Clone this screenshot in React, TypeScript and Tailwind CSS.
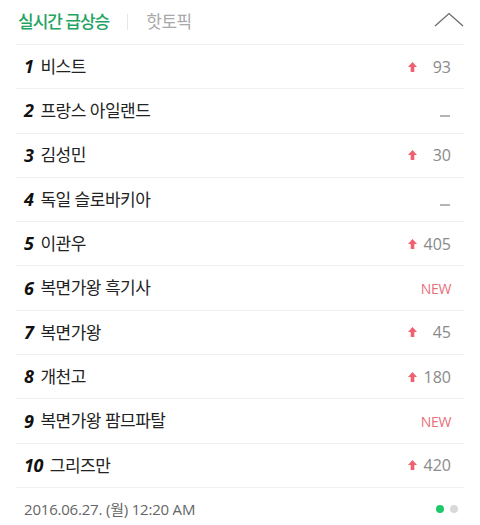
import React from 'react';

type Change = { kind: 'up'; value: number } | { kind: 'same' } | { kind: 'new' };

const keywords: { name: string; change: Change }[] = [
  { name: '비스트', change: { kind: 'up', value: 93 } },
  { name: '프랑스 아일랜드', change: { kind: 'same' } },
  { name: '김성민', change: { kind: 'up', value: 30 } },
  { name: '독일 슬로바키아', change: { kind: 'same' } },
  { name: '이관우', change: { kind: 'up', value: 405 } },
  { name: '복면가왕 흑기사', change: { kind: 'new' } },
  { name: '복면가왕', change: { kind: 'up', value: 45 } },
  { name: '개천고', change: { kind: 'up', value: 180 } },
  { name: '복면가왕 팜므파탈', change: { kind: 'new' } },
  { name: '그리즈만', change: { kind: 'up', value: 420 } },
];

const font = "font-['Open_Sans','Noto_Sans_CJK_KR',sans-serif]";

function UpArrow() {
  return (
    <svg width="9" height="10" viewBox="0 0 9 10">
      <path d="M4.5 0 L9 5 L6.3 5 L6.3 10 L2.7 10 L2.7 5 L0 5 Z" fill="#f0606e" />
    </svg>
  );
}

function ChangeCell({ change }: { change: Change }) {
  if (change.kind === 'new') {
    return <span className="text-[14px] text-[#e8707a] tracking-tight">NEW</span>;
  }
  if (change.kind === 'same') {
    return <span className="block w-[10px] h-[2px] bg-[#b5b5b5] mt-[10px] mr-[1px]" />;
  }
  return (
    <span className="flex items-center">
      <UpArrow />
      <span className="text-[16px] text-[#8a8a8a] w-[34px] text-right">{change.value}</span>
    </span>
  );
}

export default function App() {
  return (
    <div className={`w-[480px] h-[525px] bg-white ${font} overflow-hidden`}>
      {/* Tabs header */}
      <div className="flex items-center h-[44px] pl-[18px] pr-[16px]">
        <span className="text-[17px] font-medium text-[#1fa463] tracking-[-1px]">실시간 급상승</span>
        <span className="mx-[18px] w-px h-[16px] bg-[#e6e6e6]" />
        <span className="text-[17px] text-[#a9a9a9] tracking-[-0.5px]">핫토픽</span>
        <svg className="ml-auto mb-[4px]" width="30" height="16" viewBox="0 0 30 16">
          <path d="M1 14 L15 1.5 L29 14" fill="none" stroke="#6b6b6b" strokeWidth="1.3" />
        </svg>
      </div>

      {/* Keyword list */}
      <ul className="mx-[16px] w-[448px]">
        {keywords.map((k, i) => (
          <li
            key={k.name}
            className="flex items-center h-[44.3px] border-t border-[#efefef] pl-[8px] pr-[13px]"
          >
            <span className="text-[18px] font-bold italic text-[#111] mr-[7px] tracking-[-0.5px]">{i + 1}</span>
            <span className="text-[17px] text-[#222] tracking-[-0.5px]">{k.name}</span>
            <span className="ml-auto flex items-center">
              <ChangeCell change={k.change} />
            </span>
          </li>
        ))}
        <li className="border-t border-[#efefef]" />
      </ul>

      {/* Footer */}
      <div className="flex items-center h-[44px] pl-[24px] pr-[22px] -mt-[1px]">
        <span className="text-[15px] text-[#666] tracking-[-0.2px]">2016.06.27. (월) 12:20 AM</span>
        <span className="ml-auto flex gap-[6px]">
          <span className="w-[8px] h-[8px] rounded-full bg-[#1ec86b]" />
          <span className="w-[8px] h-[8px] rounded-full bg-[#d9d9d9]" />
        </span>
      </div>
    </div>
  );
}
